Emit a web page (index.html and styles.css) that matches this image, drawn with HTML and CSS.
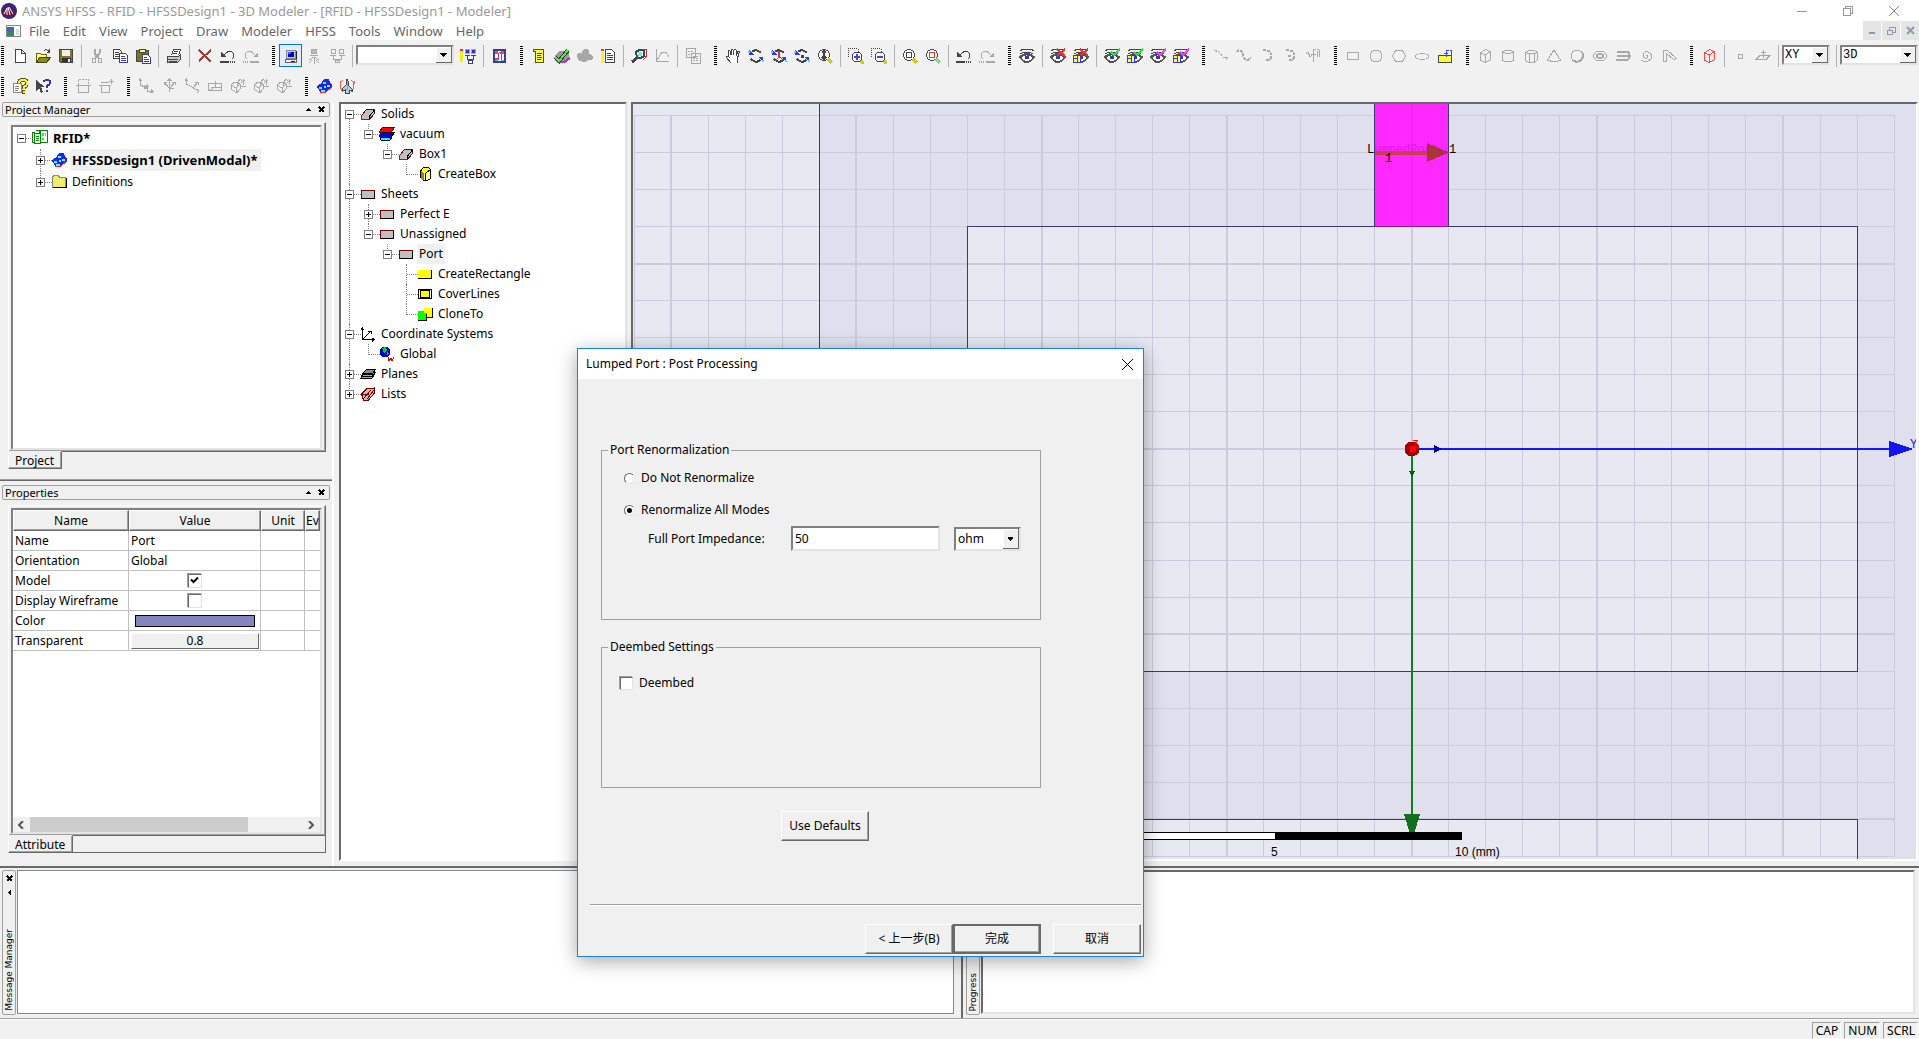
FILE: index.html
```html
<!DOCTYPE html>
<html lang="en">
<head>
<meta charset="utf-8">
<title>ANSYS HFSS - RFID - HFSSDesign1 - 3D Modeler</title>
<link rel="stylesheet" href="styles.css">
</head>
<body>
<svg class="defs" aria-hidden="true">
  <symbol id="new" viewBox="0 0 16 16"><path d="M3.500 1.500h6l4 4v9h-10zM9.500 1.500v4h4" fill="#fff" stroke="#444"/></symbol>
  <symbol id="open" viewBox="0 0 16 16"><path d="M1.500 14.500v-9h4l1 1h5v3" fill="#ffff80" stroke="#666600"/><path d="M1.500 14.500l3-5h11l-4 5z" fill="#8a8a20" stroke="#444400"/><path d="M9 3q3-3 5 1M14.500 1v4M12 4.500h3" stroke="#444" fill="none"/></symbol>
  <symbol id="save" viewBox="0 0 16 16"><path d="M1.500 1.500h13v13h-12l-1-1z" fill="#7a7a20" stroke="#444"/><path d="M4 2h8v6H4z" fill="#eee"/><path d="M4 10h9v4H4z" fill="#333"/><path d="M10 11h2v3h-2z" fill="#eee"/></symbol>
  <symbol id="cut" viewBox="0 0 16 16"><path d="M5.500 1v4l4 5M10.500 1v4l-4 5" stroke="#a8a8a8" stroke-width="2" fill="none"/><path d="M3.500 10.500h3v4h-3zM9.500 10.500h3v4h-3z" stroke="#a8a8a8" fill="none"/></symbol>
  <symbol id="copy" viewBox="0 0 16 16"><path d="M1.500 1.500h6l2 2v7h-8z" fill="#fff" stroke="#444"/><path d="M3 4.500h4M3 6.500h4M3 8.500h4" stroke="#444"/><path d="M7.500 5.500h6l2 2v7h-8z" fill="#fff" stroke="#3c3c9c"/><path d="M9 8.500h4M9 10.500h5M9 12.500h5" stroke="#3c3c9c"/></symbol>
  <symbol id="paste" viewBox="0 0 16 16"><path d="M1.500 2.500h12v11h-12z" fill="#77771c" stroke="#444"/><path d="M4.500 4.500v-3h6v3z" fill="#ffff60" stroke="#444"/><path d="M7.500 6.500h5l3 3v6h-8z" fill="#fff" stroke="#3c3c9c"/><path d="M9 9.500h3M9 11.500h5M9 13.500h5" stroke="#3c3c9c"/></symbol>
  <symbol id="print" viewBox="0 0 16 16"><path d="M5.500 7.500l2-6h7l-2 6" fill="#fff" stroke="#444"/><path d="M8 3.500h4M7 5.500h4" stroke="#444"/><path d="M1.500 8.500h11l2-2v5l-3 3h-10z" fill="#ccc" stroke="#444"/><path d="M2 11.500h10M3 13.500h8" stroke="#444"/><path d="M9 9h2v1H9z" fill="#cc0"/></symbol>
  <symbol id="del" viewBox="0 0 16 16"><path d="M2 2l12 12M14 2L2 13" stroke="#a03c3c" stroke-width="2" fill="none"/></symbol>
  <symbol id="undo" viewBox="0 0 16 16"><path d="M4 7q4-5 8-3 4 3 0 7" fill="none" stroke="currentColor"/><path d="M1 9V4l5 5z" fill="currentColor"/><path d="M0 13.500h9M10 13.500h1M12 13.500h1M14 13.500h1" stroke="currentColor" stroke-width="2"/></symbol>
  <symbol id="redo" viewBox="0 0 16 16"><path d="M12 7Q8 2 4 4q-4 3 0 7" fill="none" stroke="currentColor"/><path d="M15 9V4l-5 5z" fill="currentColor"/><path d="M7 13.500h9M0 13.500h1M2 13.500h1M4 13.500h1" stroke="currentColor" stroke-width="2"/></symbol>
  <symbol id="pc" viewBox="0 0 16 16"><path d="M3.500 2.500h9v8h-9z" fill="#ccc" stroke="#888"/><path d="M5 4h6v5H5z" fill="#00c"/><path d="M5 4h3v2H5z" fill="#46f"/><path d="M2.500 11.500h11v3h-11z" fill="#eee" stroke="#666"/><path d="M8 13h4M13.500 3v8" stroke="#222"/></symbol>
  <symbol id="pcnet" viewBox="0 0 16 16"><path d="M5.500 1.500h5v4h-5zM4 7.500h8" stroke="#a8a8a8" fill="#bbb"/><path d="M8 9l-5 3M8 9l5 3M8 10v6M6 12l-3 3M10 12l3 3" stroke="#a8a8a8"/></symbol>
  <symbol id="pcs" viewBox="0 0 16 16"><path d="M2.500 1.500h4v4h-4zM10.500 1.500h4v4h-4zM1 7.500h6M10 7.500h6M4.500 8v3h8V8M8.500 11v2" stroke="#a8a8a8" fill="none"/><path d="M6.500 12.500h4v2h-4z" stroke="#a8a8a8" fill="none"/></symbol>
  <symbol id="conf" viewBox="0 0 16 16"><path d="M0 3h3v9l-1 3H1l-1-3z" fill="#ee2"/><path d="M0 1h3v2H0z" fill="#e33"/><path d="M5.500 1.500h4v4h-4zM11.500 1.500h4v4h-4z" fill="#33c" stroke="#aaa"/><path d="M5 7.500h5M11 7.500h5M7.500 8v3h6V8M10.500 11v2" stroke="#444" fill="none"/><path d="M8.500 12.500h4v3h-4z" fill="#fff" stroke="#3c3c9c"/></symbol>
  <symbol id="omega" viewBox="0 0 16 16"><path d="M3 2h11v12H3z" fill="#fff" stroke="#3c3c8c" stroke-width="2"/><path d="M4 3h3v3H4zM10 3h3v3h-3zM4 10h3v3H4z" fill="#f44"/><path d="M7 12V6q2-3 3 0v6" stroke="#a3a" stroke-width="1" fill="#fff"/><path d="M5 12.500h2M10 12.500h3" stroke="#3cc"/></symbol>
  <symbol id="notes" viewBox="0 0 16 16"><path d="M2.500 1.500h10v13h-8v-11h-2z" fill="#ffff4a" stroke="#55550a"/><path d="M6 5.500h5M6 7.500h4M6 9.500h5M6 11.500h4" stroke="#444"/></symbol>
  <symbol id="valid" viewBox="0 0 16 16"><path d="M1 7l5-4h6l3 3v6l-4 3H4l-3-2z" fill="#999"/><path d="M10 3h4v3h-4z" fill="#5dd"/><path d="M4 14h6l6-4" stroke="#b3b" stroke-width="2" fill="none"/><path d="M1 9l4 4L14 2" stroke="#3a3a3a" stroke-width="4" fill="none"/><path d="M1 9l4 4L14 2" stroke="#4e4" stroke-width="2" fill="none"/></symbol>
  <symbol id="blob" viewBox="0 0 16 16"><path d="M0 7q2-3 5-2 0-4 4-4t3 5q4 0 4 4-1 2-4 2-4 3-8 1-4 0-4-6z" fill="#a8a8a8"/></symbol>
  <symbol id="list" viewBox="0 0 16 16"><path d="M5.500 1.500h6l3 3v10h-9z" fill="#fff" stroke="#444"/><path d="M7 5.500h4M7 7.500h6M7 9.500h6M7 11.500h6" stroke="#3c3c9c"/><path d="M1 4h3v9l-1 2H1z" fill="#fe3"/><path d="M1 1h3v2H1z" fill="#e33"/></symbol>
  <symbol id="solve" viewBox="0 0 16 16"><path d="M5 4l3-2h5v6l-3 2H6z" fill="#fff" stroke="#444" stroke-width="2"/><path d="M7 4h4v4H7z" fill="#6ee"/><path d="M6 10l-5 4" stroke="#444" stroke-width="3"/><path d="M15.500 2v6l-3 4M11 1.500h5" stroke="#a33" fill="none"/></symbol>
  <symbol id="plot" viewBox="0 0 16 16"><path d="M2.500 1v12.500H15M3 12l5-8h4l3 5" stroke="#a8a8a8" fill="none"/></symbol>
  <symbol id="copies" viewBox="0 0 16 16"><path d="M1.500.500h9v9h-9zM6.500 5.500h9v10h-9z" fill="#f0f0f0" stroke="#a8a8a8"/><path d="M8 8.500h6M8 10.500h6M8 12.500h6M3 3.500h6M3 6.500h3" stroke="#a8a8a8" stroke-dasharray="2 1"/></symbol>
  <symbol id="hand" viewBox="0 0 16 16"><path d="M6 15l-5-6q1-2 3 0L3 3q1-1 2 0l1 4V2q1-2 2 0v5l1-5q2-1 2 0v6l2-5q2 0 1 2l-2 7v3" fill="#fff" stroke="#444"/></symbol>
  <symbol id="rot" viewBox="0 0 16 16"><path d="M4 4q4-4 9 1M12 12q-4 4-9-1" stroke="#444" stroke-width="2" fill="none"/><path d="M1 2v5h5zM15 14V9h-5z" fill="#33f"/><path d="M0 3h2v2H0zM14 12h2v2h-2z" fill="#3ef"/></symbol>
  <symbol id="rotax" viewBox="0 0 16 16"><use href="#rot"/><path d="M8 3v6" stroke="#d33" stroke-width="2"/><path d="M8 9l-4 4" stroke="#3a3"/><path d="M8 9l5 3" stroke="#33f"/></symbol>
  <symbol id="rotpt" viewBox="0 0 16 16"><use href="#rot"/><path d="M7 7h3v3H7z" fill="#444"/></symbol>
  <symbol id="lens" viewBox="0 0 16 16"><circle cx="7" cy="7" r="5.500" fill="#fff" stroke="#444"/><path d="M11 11l4 4" stroke="#cc2" stroke-width="3"/></symbol>
  <symbol id="zoomud" viewBox="0 0 16 16"><use href="#lens"/><path d="M7 3v8M5 5l2-2 2 2M5 9l2 2 2-2" stroke="#444" stroke-width="2" fill="none"/></symbol>
  <symbol id="zin" viewBox="0 0 16 16"><path d="M.500 9V.500H10V4" stroke="#444" stroke-dasharray="1 1" fill="none"/><circle cx="9" cy="9" r="5" fill="#fff" stroke="#444"/><path d="M6 9h6M9 6v6" stroke="#44f" stroke-width="2"/><path d="M13 13l3 3" stroke="#cc2" stroke-width="3"/></symbol>
  <symbol id="zout" viewBox="0 0 16 16"><path d="M.500 9V.500H10V4" stroke="#444" stroke-dasharray="1 1" fill="none"/><circle cx="9" cy="9" r="5" fill="#fff" stroke="#444"/><path d="M6 9h6" stroke="#44f" stroke-width="2"/><path d="M13 13l3 3" stroke="#cc2" stroke-width="3"/></symbol>
  <symbol id="fit" viewBox="0 0 16 16"><use href="#lens"/><path d="M4.500 4.500h5v5h-5z" fill="none" stroke="#444"/></symbol>
  <symbol id="fitsel" viewBox="0 0 16 16"><use href="#lens"/><path d="M4.500 4.500h5v5h-5z" fill="none" stroke="#f33"/><path d="M12 12l2 2" stroke="#3ee" stroke-width="2"/></symbol>
  <symbol id="eye" viewBox="0 0 16 16"><path d="M1 2.500q7-3 14 0M1 6q7-4 13 0" stroke="#444" fill="none"/><path d="M1 9q7-6 14 0q-3 5-7 5T1 9z" fill="#fff" stroke="#555" stroke-width="2"/><path d="M6 6h4v5H6z" fill="#3c3c9c"/><path d="M7 7h1v1H7z" fill="#fff"/></symbol>
  <symbol id="box2" viewBox="0 0 16 16"><path d="M.500 7.500h7v7h-7z" fill="#ff3" stroke="#33f"/><path d="M1 10.500h3v4M4 8v3" stroke="#33f" fill="none"/></symbol>
  <symbol id="eyex" viewBox="0 0 16 16"><use href="#eye"/><path d="M7 1l8 7M15 1L7 8" stroke="#e33" stroke-width="2"/></symbol>
  <symbol id="eyexb" viewBox="0 0 16 16"><use href="#eyex"/><use href="#box2"/></symbol>
  <symbol id="eyec" viewBox="0 0 16 16"><use href="#eye"/><path d="M7 4l3 3 6-6" stroke="currentColor" stroke-width="2" fill="none"/></symbol>
  <symbol id="eyecb" viewBox="0 0 16 16"><use href="#eyec"/><use href="#box2"/></symbol>
  <symbol id="line" viewBox="0 0 16 16"><path d="M1 2l5 2 4 5 5 1" stroke="#a8a8a8" stroke-dasharray="3 1" fill="none"/><path d="M13 9v3" stroke="#a8a8a8"/></symbol>
  <symbol id="spline" viewBox="0 0 16 16"><path d="M1 4q4-5 6 3t8 3" stroke="#a8a8a8" stroke-width="2" stroke-dasharray="3 1" fill="none"/></symbol>
  <symbol id="arc" viewBox="0 0 16 16"><path d="M4 2.500q9-1 8 6 0 4-5 4" stroke="#a8a8a8" stroke-width="2" stroke-dasharray="3 1" fill="none"/></symbol>
  <symbol id="arcc" viewBox="0 0 16 16"><use href="#arc"/><path d="M6 7h3v2H6z" fill="#a8a8a8"/></symbol>
  <symbol id="eqn" viewBox="0 0 16 16"><path d="M1 6l2-2 2 5 2-2M8.500 14V3q0-2 2-2M6 6.500h5M12.500 3v6M12 1.500h2q1 4 0 8" stroke="currentColor" fill="none"/></symbol>
  <symbol id="rect" viewBox="0 0 16 16"><path d="M2.500 4.500h11v7h-11z" stroke="#a8a8a8" fill="none"/></symbol>
  <symbol id="circ" viewBox="0 0 16 16"><circle cx="8" cy="8" r="6" stroke="#a8a8a8" fill="none"/></symbol>
  <symbol id="hex" viewBox="0 0 16 16"><path d="M4.500 2.500h7l3 5.500-3 5.500h-7L1.500 8z" stroke="#a8a8a8" fill="none"/></symbol>
  <symbol id="ell" viewBox="0 0 16 16"><ellipse cx="8" cy="8.500" rx="6.500" ry="3" stroke="#a8a8a8" fill="none"/></symbol>
  <symbol id="eqs" viewBox="0 0 16 16"><path d="M1.500 7.500h13v7h-13z" fill="#ff3" stroke="#444"/><path d="M9.500 9V2.500h2M7 5.500h4M13 2.500h1v7" stroke="#44f" fill="none"/></symbol>
  <symbol id="cube" viewBox="0 0 16 16"><path d="M3.500 5l5-3.500 5 2v8l-5 3-5-2zM3.500 5l5 2 5-3.500M8.500 7v7" stroke="currentColor" fill="none"/></symbol>
  <symbol id="cyl" viewBox="0 0 16 16"><path d="M2.500 4v8q5.500 4 11 0V4Q8 0 2.500 4q5.500 3 11 0" stroke="#a8a8a8" fill="none"/></symbol>
  <symbol id="prism" viewBox="0 0 16 16"><path d="M2.500 4.500l3-2h6l3 2v7l-3 3h-6l-3-2zM2.500 4.500l3 1h6l3-1M6.500 6v8M11.500 6v8" stroke="#a8a8a8" fill="none"/></symbol>
  <symbol id="cone" viewBox="0 0 16 16"><path d="M8 2l6.500 10q-6 3-13 0z" stroke="#a8a8a8" fill="none"/></symbol>
  <symbol id="sph" viewBox="0 0 16 16"><circle cx="8" cy="8" r="6" stroke="#a8a8a8" fill="none"/><path d="M3 12q6 4 10-1 2-4 0-7" stroke="#a8a8a8" stroke-width="2" fill="none"/></symbol>
  <symbol id="torus" viewBox="0 0 16 16"><ellipse cx="8" cy="8" rx="6.500" ry="5" stroke="#a8a8a8" fill="none"/><ellipse cx="8" cy="8" rx="3" ry="2" stroke="#a8a8a8" stroke-width="2" fill="none"/></symbol>
  <symbol id="helix" viewBox="0 0 16 16"><path d="M2 4h10l3 1M2 8h12M1 12h12M13 4l2 4-2 4" stroke="#a8a8a8" stroke-width="2" fill="none"/></symbol>
  <symbol id="spiral" viewBox="0 0 16 16"><path d="M8 8q2-2 2 1-3 3-5-1 0-5 5-4 5 2 3 7-5 5-10 1" stroke="#a8a8a8" fill="none"/></symbol>
  <symbol id="bond" viewBox="0 0 16 16"><path d="M2.500 13V2.500h4l9 8-3 1-7-6V13z" stroke="#a8a8a8" fill="none"/></symbol>
  <symbol id="pt" viewBox="0 0 16 16"><path d="M6.500 6.500h4v4h-4z" stroke="#a8a8a8" fill="none"/></symbol>
  <symbol id="plane" viewBox="0 0 16 16"><path d="M1 11.500h10l4-4H5zM8.500 2v8M6 4.500h5" stroke="#a8a8a8" fill="none"/></symbol>
  <symbol id="helpb" viewBox="0 0 16 16"><path d="M1.500 5.500h8v9h-8z" fill="#fff" stroke="#888"/><path d="M3 8.500h4M3 10.500h4M3 12.500h3" stroke="#888"/><path d="M7 5q0-3 4-3t4 3q0 3-3 4v2M10 14h3" stroke="#55550a" stroke-width="4" fill="none"/><path d="M7 5q0-3 4-3t4 3q0 3-3 4v2M11 14h2" stroke="#fe3" stroke-width="2" fill="none"/></symbol>
  <symbol id="helpc" viewBox="0 0 16 16"><path d="M1 2v11l3-3 2 5 2-1-2-5h4z" fill="#444"/><path d="M9 4q0-2 3-2t3 2q0 3-3 4v2M11 13h2" stroke="#33a" stroke-width="2" fill="none"/></symbol>
  <symbol id="sec" viewBox="0 0 16 16"><path d="M3.500 7V1.500h10V7" stroke="#a8a8a8" stroke-dasharray="2 1" fill="none"/><path d="M1 7.500h15M3.500 8v6.500h10V8" stroke="#a8a8a8" fill="none"/></symbol>
  <symbol id="sec2" viewBox="0 0 16 16"><path d="M1 7.500h12M3.500 8v6.500h8V8M3 4.500h8" stroke="#a8a8a8" fill="none"/><path d="M13.500 1v5M11 3.500h5" stroke="#a8a8a8"/></symbol>
  <symbol id="ax1" viewBox="0 0 16 16"><path d="M2.500 1v6l6 3M1 3l1.500-2L4 3M6 7l3 3H6M9.500 7v6l6 1M8 9l1.500-2L11 9M13 11l2 3-3 1" stroke="#a8a8a8" fill="none"/></symbol>
  <symbol id="ax2" viewBox="0 0 16 16"><path d="M8.500 1v13M6.500 3l2-2 2 2M9 10l5-6M11 4h3v3M8 10L3 4M3 7V4h3M9 10l4 1" stroke="#a8a8a8" fill="none"/></symbol>
  <symbol id="ax3" viewBox="0 0 16 16"><path d="M2.500 1v5l7 4M1 3l1.500-2L4 3M9 10l5-6M11 4h3v3M9 10l6 3M13 15l2-2-2-2" stroke="#a8a8a8" fill="none"/></symbol>
  <symbol id="ax4" viewBox="0 0 16 16"><path d="M1.500 5.500h13v7h-13zM4 9.500h8M8.500 3v6l5 0M8 9l-5 3" stroke="#a8a8a8" fill="none"/></symbol>
  <symbol id="ax5" viewBox="0 0 16 16"><path d="M1 7l4-3 5 2v5l-3 4-5-3zM1 7l5 3 4-4M6 10v5M7 8l3-7M13 1v6M8 3l2-2 2 2M11 5l4-3M11 8h5" stroke="#a8a8a8" fill="none"/></symbol>
  <symbol id="hf" viewBox="0 0 16 16"><path d="M3 14l2 1h4l7-5-1-3-5 6z" fill="#f22"/><path d="M7 2l2-1h4l1 4 2 1v3l-4 2-1 2-3 1H4l-1-2-2-2V8l3-2 2-1z" fill="#22e"/><path d="M7 4h3v2H7zM3 9h3v2H3zM11 7h3v2h-3zM5 12h4v2H5zM8 8h2v2H8z" fill="#4ff"/></symbol>
  <symbol id="plane2" viewBox="0 0 16 16"><path d="M4 2Q1 4 2 7l-1 2q1 2 3 5M12 2q3 2 2 5l1 2q-1 2-3 5M1 3v3M15 3v3" stroke="#f54" fill="none"/><path d="M8 1l1 2v4l4 4v2l-3-1v3H6v-3l-3 1v-2l4-4V3z" fill="#bcd" stroke="#444"/><path d="M8 4v8" stroke="#3cc"/></symbol>
  <symbol id="proj" viewBox="0 0 16 16"><path d="M7.500.500h8v12h-8zM3.500.500h5v4" fill="#fff" stroke="#080"/><path d="M.500 2.500h2v10h-2zM2.500 3.500h5l1 1v9h-6z" fill="#fff" stroke="#080"/><path d="M4 6.500h3M4 8.500h3M4 10.500h3" stroke="#080"/><path d="M10 3h2v3h-2zM13 3h1v3h-1zM10 8h2v2h-2z" fill="#0f3"/></symbol>
  <symbol id="folder" viewBox="0 0 16 16"><path d="M1.500 3.500l1-2h5l1 2h6v10h-13z" fill="#ee6" stroke="#888"/><path d="M2 13.500h13V4" stroke="#000" fill="none"/></symbol>
  <symbol id="solid" viewBox="0 0 16 16"><path d="M1.500 9.500l5-6h8v4l-5 6h-8z" fill="#c0c0c0" stroke="#800000"/><path d="M9.500 13v-3l5-6" stroke="#000" fill="none"/><path d="M1.500 9v4.500h7" stroke="#444" fill="none"/></symbol>
  <symbol id="vac" viewBox="0 0 16 16"><path d="M0 6l4-5h12l-4 5z" fill="#f00" stroke="#700"/><path d="M0 9l3-3h13l-4 5H1z" fill="#00d" stroke="#000"/><path d="M1 13l2-2h10l-2 3H2z" fill="#0ff" stroke="#000"/></symbol>
  <symbol id="cbox" viewBox="0 0 16 16"><path d="M3.500 5l3-3.500h5l2 2v9l-3 2h-4l-3-3z" fill="#ffff8c" stroke="#000"/><path d="M4 5l3 2v7H5l-1-2z" fill="#882"/><path d="M4 5l3-3h4l2 2-4 3H7z" fill="#ff0"/><path d="M8.500 7v7M9 7l4-3" stroke="#000"/></symbol>
  <symbol id="sheet" viewBox="0 0 16 16"><path d="M1.500 4.500h13v8h-13z" fill="#c0c0c0" stroke="#800000"/><path d="M1 12.500h13.500V5" stroke="#000" fill="none"/></symbol>
  <symbol id="yrect" viewBox="0 0 16 16"><path d="M1 4h14v9H1z" fill="#ff0"/><path d="M1 12.500h13.500V4" stroke="#000" fill="none"/></symbol>
  <symbol id="cover" viewBox="0 0 16 16"><path d="M1.500 3.500h13v9h-13z" fill="#fff" stroke="#000"/><path d="M3.500 4.500h9v7h-9z" fill="#ff0" stroke="#000"/></symbol>
  <symbol id="clone" viewBox="0 0 16 16"><path d="M7 2h8v9H7z" fill="#ff0"/><path d="M7 11.500h8.500V2" stroke="#000" fill="none"/><path d="M1 5h6v2h3v8H1z" fill="#0f0"/><path d="M1 14.500h8.500V8" stroke="#000" fill="none"/></symbol>
  <symbol id="cs" viewBox="0 0 16 16"><path d="M2.500 2v11.500H14M3 13l8-8M1 4l1.500-2L4 4M12 12l2 1.500-2 2M8 5h3v3" stroke="#000" fill="none"/></symbol>
  <symbol id="globe" viewBox="0 0 16 16"><circle cx="6" cy="6" r="5.500" fill="#00c"/><path d="M3 2l4-1 1 3-3 3zM8 6l2 1-2 3z" fill="#0c3"/><path d="M9 11l1 4 2-3 1 3 2-4" stroke="#d00" stroke-width="1" fill="none"/></symbol>
  <symbol id="planes" viewBox="0 0 16 16"><path d="M.500 12.500l3-4h11l-3 4zM1.500 10l3-4h11l-3 4z" fill="#aaa" stroke="#000"/><path d="M2.500 7.500l4-4h9l-3 4z" fill="#888" stroke="#000"/></symbol>
  <symbol id="lists" viewBox="0 0 16 16"><path d="M1.500 8l5-5 8-1v5l-6 7h-5z" fill="#c0c0c0" stroke="#800000"/><path d="M3 13l8-9M7 13l7-9M1 8h8" stroke="#800000" fill="none"/></symbol>
</svg>

<header class="titlebar">
  <svg class="logo" viewBox="0 0 16 16"><circle cx="8" cy="8" r="8" fill="#3b2473"/><path d="M1 12L7 3l7 9" fill="#7a1030"/><path d="M3 11l3-6M6 12V5M9 12L7 4M12 11L8 4" stroke="#fff" stroke-width="1"/></svg>
  <span class="title-text">ANSYS HFSS - RFID - HFSSDesign1 - 3D Modeler - [RFID - HFSSDesign1 - Modeler]</span>
  <div class="winctl">
    <button aria-label="Minimize"><svg viewBox="0 0 10 10"><path d="M0 5.500h10" stroke="#999"/></svg></button>
    <button aria-label="Restore"><svg viewBox="0 0 10 10"><path d="M.500 2.500h7v7h-7zM2.500 2V.500h7v7H8" fill="none" stroke="#999"/></svg></button>
    <button aria-label="Close"><svg class="smooth" viewBox="0 0 10 10"><path d="M0 0l10 10M10 0L0 10" stroke="#888"/></svg></button>
  </div>
</header>

<nav class="menubar">
  <svg class="docicon" viewBox="0 0 15 12"><path d="M.500.500h14v11H.500z" fill="#fff" stroke="#888"/><path d="M1 2h7v9H1z" fill="#386"/><path d="M1 2h7v4H1z" fill="#46a"/><path d="M10 4h3v6h-3z" fill="#ddd"/></svg>
  <button>File</button><button>Edit</button><button>View</button><button>Project</button><button>Draw</button><button>Modeler</button><button>HFSS</button><button>Tools</button><button>Window</button><button>Help</button>
  <div class="mdictl">
    <button aria-label="Minimize document"><svg viewBox="0 0 9 9"><path d="M1 7h6" stroke="#8c9caa" stroke-width="2"/></svg></button>
    <button aria-label="Restore document"><svg viewBox="0 0 9 9"><path d="M.500 4.500h5v4h-5zM2.500 4V1h6v5H6M0 4h6M2 1h7" fill="none" stroke="#8c9caa"/></svg></button>
    <button aria-label="Close document"><svg class="smooth" viewBox="0 0 9 9"><path d="M1 1l7 7M8 1L1 8" stroke="#8c9caa" stroke-width="2"/></svg></button>
  </div>
</nav>

<div class="toolbars">
  <div class="toolrow">
    <div class="group"><button aria-label="New"><svg><use href="#new"/></svg></button><button aria-label="Open"><svg><use href="#open"/></svg></button><button aria-label="Save"><svg><use href="#save"/></svg></button><i class="sep"></i><button aria-label="Cut"><svg><use href="#cut"/></svg></button><button aria-label="Copy"><svg><use href="#copy"/></svg></button><button aria-label="Paste"><svg><use href="#paste"/></svg></button><i class="sep"></i><button aria-label="Print"><svg><use href="#print"/></svg></button><i class="sep"></i><button aria-label="Delete"><svg><use href="#del"/></svg></button><button aria-label="Undo"><svg><use href="#undo"/></svg></button><button aria-label="Redo" class="off"><svg><use href="#redo"/></svg></button></div>
    <div class="group"><button aria-label="Local machine" class="on"><svg><use href="#pc"/></svg></button><button aria-label="Remote"><svg><use href="#pcnet"/></svg></button><button aria-label="Distributed"><svg><use href="#pcs"/></svg></button><i class="sep"></i><select class="machine" aria-label="Machine"><option></option></select><button aria-label="Configure machines"><svg><use href="#conf"/></svg></button><i class="sep"></i><button aria-label="Optimetrics"><svg><use href="#omega"/></svg></button></div>
    <div class="group"><button aria-label="Design notes"><svg><use href="#notes"/></svg></button><button aria-label="Validate"><svg><use href="#valid"/></svg></button><button aria-label="Analyze"><svg><use href="#blob"/></svg></button><button aria-label="Edit notes"><svg><use href="#list"/></svg></button><i class="sep"></i><button aria-label="Solution data"><svg><use href="#solve"/></svg></button><button aria-label="Report"><svg><use href="#plot"/></svg></button><i class="sep"></i><button aria-label="Copy image"><svg><use href="#copies"/></svg></button></div>
    <div class="group"><button aria-label="Pan"><svg><use href="#hand"/></svg></button><button aria-label="Rotate"><svg><use href="#rot"/></svg></button><button aria-label="Rotate about axis"><svg><use href="#rotax"/></svg></button><button aria-label="Rotate about centre"><svg><use href="#rotpt"/></svg></button><button aria-label="Zoom"><svg><use href="#zoomud"/></svg></button><i class="sep"></i><button aria-label="Zoom in"><svg><use href="#zin"/></svg></button><button aria-label="Zoom out"><svg><use href="#zout"/></svg></button><i class="sep"></i><button aria-label="Fit all"><svg><use href="#fit"/></svg></button><button aria-label="Fit selection"><svg><use href="#fitsel"/></svg></button><i class="sep"></i><button aria-label="Undo view"><svg><use href="#undo"/></svg></button><button aria-label="Redo view" class="off"><svg><use href="#redo"/></svg></button></div>
    <div class="group"><button aria-label="Visibility"><svg><use href="#eye"/></svg></button><i class="sep"></i><button aria-label="Hide"><svg><use href="#eyex"/></svg></button><button aria-label="Hide in all views"><svg><use href="#eyexb"/></svg></button><i class="sep"></i><button aria-label="Show" class="green"><svg><use href="#eyec"/></svg></button><button aria-label="Show in all views" class="green"><svg><use href="#eyecb"/></svg></button><button aria-label="Show only" class="pink"><svg><use href="#eyec"/></svg></button><button aria-label="Show only in all views" class="pink"><svg><use href="#eyecb"/></svg></button></div>
    <div class="group"><button aria-label="Line"><svg><use href="#line"/></svg></button><button aria-label="Spline"><svg><use href="#spline"/></svg></button><button aria-label="Arc"><svg><use href="#arc"/></svg></button><button aria-label="Centre arc"><svg><use href="#arcc"/></svg></button><button aria-label="Equation curve" class="off"><svg><use href="#eqn"/></svg></button></div>
    <div class="group"><button aria-label="Rectangle"><svg><use href="#rect"/></svg></button><button aria-label="Circle"><svg><use href="#circ"/></svg></button><button aria-label="Polygon"><svg><use href="#hex"/></svg></button><button aria-label="Ellipse"><svg><use href="#ell"/></svg></button><button aria-label="Equation surface"><svg><use href="#eqs"/></svg></button></div>
    <div class="group"><button aria-label="Box" class="off"><svg><use href="#cube"/></svg></button><button aria-label="Cylinder"><svg><use href="#cyl"/></svg></button><button aria-label="Prism"><svg><use href="#prism"/></svg></button><button aria-label="Cone"><svg><use href="#cone"/></svg></button><button aria-label="Sphere"><svg><use href="#sph"/></svg></button><button aria-label="Torus"><svg><use href="#torus"/></svg></button><button aria-label="Helix"><svg><use href="#helix"/></svg></button><button aria-label="Spiral"><svg><use href="#spiral"/></svg></button><button aria-label="Bondwire"><svg><use href="#bond"/></svg></button></div>
    <div class="group last"><button aria-label="Region" class="red"><svg><use href="#cube"/></svg></button><i class="sep"></i><button aria-label="Point"><svg><use href="#pt"/></svg></button><button aria-label="Plane"><svg><use href="#plane"/></svg></button><i class="sep"></i><select class="xy" aria-label="Drawing plane"><option>XY</option></select><i class="sep"></i><select class="dim" aria-label="Movement mode"><option>3D</option></select></div>
  </div>
  <div class="toolrow second">
    <div class="group"><button aria-label="Help topics"><svg><use href="#helpb"/></svg></button><button aria-label="Context help"><svg><use href="#helpc"/></svg></button></div>
    <div class="group"><button aria-label="Section"><svg><use href="#sec"/></svg></button><button aria-label="Add section"><svg><use href="#sec2"/></svg></button></div>
    <div class="group"><button aria-label="Relative offset"><svg><use href="#ax1"/></svg></button><button aria-label="Relative rotated"><svg><use href="#ax2"/></svg></button><button aria-label="Relative both"><svg><use href="#ax3"/></svg></button><button aria-label="Face system"><svg><use href="#ax4"/></svg></button><button aria-label="Object offset"><svg><use href="#ax5"/></svg></button><button aria-label="Object rotated"><svg><use href="#ax5"/></svg></button><button aria-label="Object both"><svg><use href="#ax5"/></svg></button></div>
    <div class="group"><button aria-label="Insert HFSS design"><svg><use href="#hf"/></svg></button><button aria-label="Insert HFSS-IE design"><svg><use href="#plane2"/></svg></button></div>
  </div>
</div>

<main class="work">
  <aside class="docks">
    <section class="dock project">
      <h2 class="caption"><span>Project Manager</span><button aria-label="Collapse project manager"><svg viewBox="0 0 7 7"><path d="M1 5h5L3.500 2z"/></svg></button><button aria-label="Close project manager"><svg viewBox="0 0 7 7"><path d="M1 1l5 5M6 1L1 6" stroke="#000" stroke-width="2"/></svg></button></h2>
      <div class="frame">
        <div class="sunken">
          <ul class="tree wide">
            <li><div class="node"><b class="exp"></b><svg><use href="#proj"/></svg><strong>RFID*</strong></div>
              <ul>
                <li><div class="node"><b class="exp plus"></b><svg><use href="#hf"/></svg><strong class="sel">HFSSDesign1 (DrivenModal)*</strong></div></li>
                <li><div class="node"><b class="exp plus"></b><svg><use href="#folder"/></svg><span>Definitions</span></div></li>
              </ul>
            </li>
          </ul>
        </div>
      </div>
      <div class="tabs"><button>Project</button></div>
    </section>
    <section class="dock props">
      <h2 class="caption"><span>Properties</span><button aria-label="Collapse properties"><svg viewBox="0 0 7 7"><path d="M1 5h5L3.500 2z"/></svg></button><button aria-label="Close properties"><svg viewBox="0 0 7 7"><path d="M1 1l5 5M6 1L1 6" stroke="#000" stroke-width="2"/></svg></button></h2>
      <div class="frame">
        <div class="sunken">
          <table>
            <colgroup><col class="c-name"><col class="c-value"><col class="c-unit"><col></colgroup>
            <thead><tr><th>Name</th><th>Value</th><th>Unit</th><th>Ev</th></tr></thead>
            <tbody>
              <tr><td>Name</td><td>Port</td><td></td><td></td></tr>
              <tr><td>Orientation</td><td>Global</td><td></td><td></td></tr>
              <tr><td><label for="model">Model</label></td><td class="mid"><input type="checkbox" id="model" checked></td><td></td><td></td></tr>
              <tr><td><label for="wire">Display Wireframe</label></td><td class="mid"><input type="checkbox" id="wire"></td><td></td><td></td></tr>
              <tr><td>Color</td><td class="mid"><button class="swatch" aria-label="Color"></button></td><td></td><td></td></tr>
              <tr><td>Transparent</td><td class="mid"><button class="cellbtn">0.8</button></td><td></td><td></td></tr>
            </tbody>
          </table>
          <div class="hscroll"><svg viewBox="0 0 8 8"><path d="M6 0L2 4l4 4" fill="none" stroke="#555" stroke-width="2"/></svg><div class="track"><i></i></div><svg viewBox="0 0 8 8"><path d="M2 0l4 4-4 4" fill="none" stroke="#555" stroke-width="2"/></svg></div>
        </div>
      </div>
      <div class="tabs filled"><button>Attribute</button></div>
    </section>
  </aside>

  <section class="modeltree">
    <ul class="tree">
      <li><div class="node"><b class="exp"></b><svg><use href="#solid"/></svg><span>Solids</span></div>
        <ul><li><div class="node"><b class="exp"></b><svg><use href="#vac"/></svg><span>vacuum</span></div>
          <ul><li><div class="node"><b class="exp"></b><svg><use href="#solid"/></svg><span>Box1</span></div>
            <ul><li><div class="node leaf"><svg><use href="#cbox"/></svg><span>CreateBox</span></div></li></ul></li></ul></li></ul></li>
      <li><div class="node"><b class="exp"></b><svg><use href="#sheet"/></svg><span>Sheets</span></div>
        <ul><li><div class="node"><b class="exp plus"></b><svg><use href="#sheet"/></svg><span>Perfect E</span></div></li>
          <li><div class="node"><b class="exp"></b><svg><use href="#sheet"/></svg><span>Unassigned</span></div>
            <ul><li><div class="node"><b class="exp"></b><svg><use href="#sheet"/></svg><span class="sel">Port</span></div>
              <ul><li><div class="node leaf"><svg><use href="#yrect"/></svg><span>CreateRectangle</span></div></li>
                <li><div class="node leaf"><svg><use href="#cover"/></svg><span>CoverLines</span></div></li>
                <li><div class="node leaf"><svg><use href="#clone"/></svg><span>CloneTo</span></div></li></ul></li></ul></li></ul></li>
      <li><div class="node"><b class="exp"></b><svg><use href="#cs"/></svg><span>Coordinate Systems</span></div>
        <ul><li><div class="node leaf"><svg><use href="#globe"/></svg><span>Global</span></div></li></ul></li>
      <li><div class="node"><b class="exp plus"></b><svg><use href="#planes"/></svg><span>Planes</span></div></li>
      <li><div class="node"><b class="exp plus"></b><svg><use href="#lists"/></svg><span>Lists</span></div></li>
    </ul>
  </section>

  <section class="viewport">
    <svg class="scene" viewBox="633 104 1283 755" preserveAspectRatio="xMinYMin slice">
      <path d="M633 104h1284v756H633z" fill="#e8e8f2"/>
      <path d="M819 104h1098v756h-60v-41H819z" fill="#e0dfed"/>
      <path d="M967 226h890v445H967z" fill="#e8e8f2"/>
      <g fill="none" stroke="#cbcbdb">
        <path d="M634.500 115v741M708.500 115v741M745.500 115v741M782.500 115v741M819.500 115v741M893.500 115v741M930.500 115v741M967.500 115v741M1004.500 115v741M1078.500 115v741M1115.500 115v741M1152.500 115v741M1189.500 115v741M1263.500 115v741M1300.500 115v741M1337.500 115v741M1374.500 115v741M1448.500 115v741M1485.500 115v741M1522.500 115v741M1559.500 115v741M1634.500 115v741M1671.500 115v741M1708.500 115v741M1745.500 115v741M1820.500 115v741M1857.500 115v741M1894.500 115v741"/>
        <path d="M634 115.500h1261M634 152.500h1261M634 189.500h1261M634 226.500h1261M634 300.500h1261M634 337.500h1261M634 374.500h1261M634 411.500h1261M634 485.500h1261M634 522.500h1261M634 560.500h1261M634 597.500h1261M634 671.500h1261M634 708.500h1261M634 745.500h1261M634 782.500h1261M634 856.500h1261"/>
        <path stroke-width="2" d="M671 115v741M856 115v741M1042 115v741M1227 115v741M1412 115v741M1597 115v741M1783 115v741M634 264h1261M634 449h1261M634 634h1261M634 819h1261"/>
      </g>
      <path d="M1375 104h73v122h-73z" fill="#ff28ff"/>
      <path d="M1412 104v122" stroke="#f622fa" stroke-width="2"/>
      <path d="M819.500 104v715.500h1038V860M967.500 226.500h890v445h-890zM1374.500 104v122M1448.500 104v122" fill="none" stroke="#3a3a72"/>
      <path d="M1375 226.500h73" stroke="#8a1a9a"/>
      <text class="mono" x="1367" y="153">L<tspan fill="#e416e4">umpedPort</tspan></text><text class="mono" x="1449" y="153">1</text>
      <path d="M1375 152.500h53" stroke="#c8404c" stroke-width="4"/><path d="M1427 143l22 9.500-22 9.500z" fill="#a8343c"/>
      <text class="mono" x="1385" y="162">1</text>
      <path d="M1416 449h474" stroke="#1414ff" stroke-width="2"/><path d="M1889 441l24 8-24 8z" fill="#1414f0"/><path d="M1434 445l8 4-8 4z" fill="#0000b8"/>
      <path d="M1412 449v366" stroke="#10801c" stroke-width="2"/><path d="M1404 814h16l-6 20h-4z" fill="#12701c"/><path d="M1409 471h6l-3 6z" fill="#006000"/>
      <circle cx="1412" cy="449" r="7.500" fill="#a80000"/><circle cx="1413" cy="449" r="3.500" fill="#f00"/><text class="mono" x="1412" y="447" fill="#f00">z</text>
      <text class="mono" x="1910" y="448" fill="#1414ff">Y</text>
      <path d="M1088.500 832.500h373v7h-373z" fill="#fff" stroke="#000"/><path d="M1275 832h187v8h-187z"/>
      <text class="scale" x="1271" y="856">5</text><text class="scale" x="1455" y="856">10 (mm)</text>
    </svg>
  </section>
</main>

<section class="bottom">
  <div class="bdock msg">
    <div class="vcap"><button aria-label="Close message manager"><svg viewBox="0 0 7 7"><path d="M1 1l5 5M6 1L1 6" stroke="#000" stroke-width="2"/></svg></button><button aria-label="Collapse message manager"><svg viewBox="0 0 7 7"><path d="M5 1v5L2 3.500z"/></svg></button><span>Message Manager</span></div>
    <div class="pane"></div>
  </div>
  <div class="bdock prog">
    <div class="vcap"><span>Progress</span></div>
    <div class="pane"></div>
  </div>
</section>

<footer class="status"><span>CAP</span><span>NUM</span><span>SCRL</span></footer>

<div class="dialog" role="dialog" aria-labelledby="dlg-title">
  <div class="dlg-title"><span id="dlg-title">Lumped Port : Post Processing</span><button aria-label="Close dialog"><svg class="smooth" viewBox="0 0 11 11"><path d="M0 0l11 11M11 0L0 11" stroke="#000"/></svg></button></div>
  <form class="dlg-body">
    <fieldset class="renorm"><legend>Port Renormalization</legend>
      <label class="opt"><input type="radio" name="renorm">Do Not Renormalize</label>
      <label class="opt"><input type="radio" name="renorm" checked>Renormalize All Modes</label>
      <div class="imp"><label for="imp">Full Port Impedance:</label><input type="text" id="imp" value="50"><select class="ohm" aria-label="Impedance unit"><option>ohm</option></select></div>
    </fieldset>
    <fieldset class="deembed"><legend>Deembed Settings</legend>
      <label class="opt"><input type="checkbox">Deembed</label>
    </fieldset>
    <button type="button" class="btn defaults">Use Defaults</button>
    <div class="dlg-foot">
      <button type="button" class="btn">&lt; 上一步(B)</button><button type="button" class="btn primary">完成</button><button type="button" class="btn cancel">取消</button>
    </div>
  </form>
</div>
</body>
</html>
```
FILE: styles.css
```css
* { box-sizing: border-box; }

body {
  margin: 0;
  height: 100vh;
  display: flex;
  flex-direction: column;
  overflow: hidden;
  background: #f0f0f0;
  color: #000;
  font: 12px/20px "Noto Sans", "Noto Sans CJK SC", sans-serif;
}

.defs { position: absolute; width: 0; height: 0; }
svg { display: block; flex: none; shape-rendering: crispEdges; }
.smooth, .logo { shape-rendering: auto; }

button, input, select {
  margin: 0;
  padding: 0;
  border: 0;
  border-radius: 0;
  background: none;
  color: inherit;
  font: inherit;
  appearance: none;
}

/* title and menu */
.titlebar { display: flex; align-items: center; height: 21px; flex: none; background: #fff; color: #999; font-size: 13px; }
.logo { width: 16px; height: 16px; margin: 0 5px 0 1px; }
.title-text { flex: 1; white-space: nowrap; }
.winctl { display: flex; margin-right: 2px; }
.winctl button { width: 46px; height: 18px; display: grid; place-items: center; }
.winctl svg { width: 10px; height: 10px; }

.menubar { display: flex; align-items: center; height: 19px; flex: none; background: #fff; color: #666; font-size: 13px; }
.docicon { width: 15px; height: 12px; margin: 0 0 0 6px; }
.menubar > button { padding: 0 5px 0 8px; }
.mdictl { display: flex; gap: 1px; margin-left: auto; align-self: stretch; }
.mdictl button { width: 18px; background: #e5e5e5; display: grid; place-items: center; }
.mdictl svg { width: 9px; height: 9px; }

/* toolbars */
.toolbars { flex: none; height: 62px; background: #f1f1f1; }
.toolrow { display: flex; height: 31px; align-items: center; padding-left: 1px; }
.toolrow.second { height: 30px; }
.group { display: flex; align-items: center; margin-right: 10px; }
.group::before { content: ""; width: 3px; height: 19px; margin-right: 4px; background: repeating-linear-gradient(#000 0 1px, transparent 1px 2px); }
.group.last { margin-right: 0; flex: 1; }
.group button { width: 23px; height: 23px; display: grid; place-items: center; color: #444; }
.group svg { width: 16px; height: 16px; }
.group .off { color: #a8a8a8; }
.group .green { color: #3d4; }
.group .pink { color: #e4e; }
.group .red { color: #f44; }
.group .on { background: #e0ecf7; border: 1px solid #0078d7; }
.sep { width: 1px; height: 22px; margin: 0 3px 0 4px; background: #b4b4b4; }

select {
  background: #fff url("data:image/svg+xml,%3Csvg xmlns='http://www.w3.org/2000/svg' width='16' height='16' shape-rendering='crispEdges'%3E%3Cpath fill='%23f0f0f0' d='M0 0h16v16H0z'/%3E%3Cpath d='M.5 15V.5H15' stroke='%23fff' fill='none'/%3E%3Cpath d='M0 15.500h15.500V0' stroke='%23696969' fill='none'/%3E%3Cpath d='M4 6h7L7.500 10z'/%3E%3C/svg%3E") no-repeat right center;
  border: 2px solid;
  border-color: #808080 #e3e3e3 #e3e3e3 #808080;
}
.machine { width: 98px; height: 20px; margin: 0 2px 2px 0; }
.xy, .dim { height: 20px; line-height: 16px; font-family: "Liberation Mono", monospace; padding-left: 1px; margin-bottom: 2px; }
.xy { width: 48px; margin-right: 2px; }
.dim { flex: 1; min-width: 60px; margin-right: 1px; }

/* main area */
.work { flex: 1; min-height: 0; display: flex; }
.docks { width: 334px; flex: none; display: flex; flex-direction: column; border-right: 2px solid #fff; margin-right: 5px; }
.dock { display: flex; flex-direction: column; padding: 0 6px 0 8px; }
.project { height: 379px; flex: none; border-bottom: 1px solid #696969; box-shadow: inset 0 -1px #a0a0a0; }
.props { flex: 1; min-height: 0; padding-top: 4px; }
.caption {
  display: flex; align-items: center; height: 15px; flex: none; gap: 2px;
  margin: 0 -4px 5px -6px; padding: 0 2px;
  border: 1px solid #a0a0a0; border-radius: 2px;
  font: 11px/13px "Noto Sans", sans-serif;
}
.caption span { flex: 1; }
.caption button { width: 11px; height: 11px; display: grid; place-items: center; }
.caption svg { width: 7px; height: 7px; }
.frame { flex: 1; min-height: 0; display: flex; padding: 2px 3px 1px 2px; border: 1px solid; border-color: #fff #696969 #696969 #fff; box-shadow: inset -1px -1px #a0a0a0; }
.sunken { flex: 1; min-width: 0; display: flex; flex-direction: column; background: #fff; border: 2px solid; border-color: #808080 #e3e3e3 #e3e3e3 #808080; overflow: hidden; }
.tabs { display: flex; height: 18px; flex: none; }
.tabs button { height: 18px; margin-top: -1px; padding: 0 7px 0 6px; line-height: 17px; background: #f0f0f0; border: 1px solid; border-color: #f0f0f0 #696969 #696969 #fff; box-shadow: inset -1px -1px #a0a0a0; }
.project .tabs { margin-bottom: 10px; }
.props .tabs { margin-bottom: 12px; }
.filled::after { content: ""; flex: 1; height: 16px; border: 1px solid #696969; border-left: 0; border-top: 0; }

/* trees */
.tree, .tree ul { list-style: none; margin: 0; padding: 0; }
.tree ul { padding-left: 19px; }
.tree li { position: relative; }
.tree li::before { content: ""; position: absolute; left: 4px; top: 0; bottom: 0; border-left: 1px dotted #808080; }
.tree li:last-child::before { bottom: auto; height: 11px; }
.tree > li:first-child::before { top: 11px; }
.tree > li:only-child::before { display: none; }
.node { position: relative; display: flex; align-items: center; height: 20px; white-space: nowrap; }
.node::before { content: ""; position: absolute; left: 5px; width: 11px; border-top: 1px dotted #808080; }
.leaf { padding-left: 9px; }
.exp { position: relative; width: 9px; height: 9px; border: 1px solid #808080; background: linear-gradient(#000, #000) center / 5px 1px no-repeat #fff; }
.exp.plus { background: linear-gradient(#000, #000) center / 5px 1px no-repeat, linear-gradient(#000, #000) center / 1px 5px no-repeat #fff; }
.node svg { width: 16px; height: 16px; margin: 0 3px 0 6px; }
.node span, .node strong { padding: 0 2px; }
.node .sel { background: #f0f0f0; }
.tree.wide { padding: 0 0 0 4px; }
.wide .node { height: 22px; line-height: 22px; }
.wide strong, .wide span { padding-right: 3px; }
.wide strong { font-size: 13px; }

.modeltree { width: 288px; flex: none; margin: 0 4px 5px 0; padding: 0 0 0 4px; background: #fff; border: 2px solid; border-color: #696969 #e3e3e3 #fff #696969; }

/* properties */
table { width: 100%; border-collapse: separate; border-spacing: 0; table-layout: fixed; }
.c-name { width: 116px; }
.c-value { width: 132px; }
.c-unit { width: 44px; }
th { height: 21px; padding: 0; background: #f0f0f0; font-weight: 400; line-height: 18px; border: 1px solid; border-color: #fff #696969 #696969 #fff; overflow: hidden; box-shadow: inset -1px -1px #a0a0a0; }
td { height: 20px; padding: 0 0 0 2px; line-height: 19px; white-space: nowrap; border-right: 1px solid #c0c0c0; border-bottom: 1px solid #c0c0c0; }
td:last-child { border-right: 0; }
td.mid { text-align: center; padding: 0 2px; }
td.mid > * { display: block; margin: 0 auto; }
input[type="checkbox"] { width: 13px; height: 13px; background: #fff; border: 1px solid; border-color: #696969 #e3e3e3 #e3e3e3 #696969; box-shadow: -1px -1px #a0a0a0; }
td input[type="checkbox"] { width: 14px; height: 14px; }
input[type="checkbox"]:checked { background: #fff url("data:image/svg+xml,%3Csvg xmlns='http://www.w3.org/2000/svg' width='9' height='9'%3E%3Cpath d='M1 3.500l2.500 2.500L8 1.500' stroke='%23000' stroke-width='2' fill='none'/%3E%3C/svg%3E") no-repeat center; }
td .swatch { width: 120px; height: 12px; background: #8484c0; border: 1px solid #000; }
td .cellbtn { width: 128px; height: 16px; line-height: 14px; background: #f0f0f0; border: 1px solid; border-color: #fff #696969 #696969 #fff; }
.hscroll { margin-top: auto; height: 15px; display: flex; align-items: center; background: #f0f0f0; flex: none; }
.hscroll svg { width: 8px; height: 8px; margin: 0 5px 0 4px; shape-rendering: auto; }
.track { flex: 1; align-self: stretch; display: flex; }
.track i { width: 80%; background: #cdcdcd; }

/* 3D view */
.viewport { flex: 1; min-width: 0; margin: 0 1px 5px 0; border: 2px solid; border-color: #696969 #fff #fff #696969; overflow: hidden; }
.scene { width: 100%; height: 100%; }
.mono { font: 12px "Liberation Mono", monospace; }
.scale { font: 12px "Liberation Sans", sans-serif; }

/* bottom docks */
.bottom { flex: none; height: 153px; display: flex; border-top: 2px solid #696969; border-bottom: 1px solid #a0a0a0; }
.bdock { display: flex; gap: 1px; padding: 2px; }
.msg { flex: 1; border-right: 2px solid #696969; padding-right: 7px; }
.prog { width: calc(50% - 3px); padding: 2px 4px 2px 3px; }
.vcap { width: 14px; margin-bottom: 1px; display: flex; flex-direction: column; align-items: center; padding: 1px 0 3px; gap: 2px; border: 1px solid #a0a0a0; border-radius: 2px; }
.vcap button { width: 11px; height: 12px; display: grid; place-items: center; }
.vcap svg { width: 7px; height: 7px; }
.vcap span { margin-top: auto; writing-mode: vertical-rl; transform: rotate(180deg); font: 9px/12px "DejaVu Sans", sans-serif; white-space: nowrap; }
.pane { flex: 1; background: #fff; border: 1px solid #828790; margin-bottom: 2px; }
.prog .pane { border: 2px solid; border-color: #696969 #e3e3e3 #e3e3e3 #696969; }

.status { flex: none; height: 20px; display: flex; justify-content: flex-end; gap: 3px; padding: 2px 1px 0 0; border-top: 1px solid #fff; }
.status span { padding: 0 2px 0 3px; line-height: 16px; border: 1px solid; border-color: #a0a0a0 #fff #fff #a0a0a0; }

/* dialog */
.dialog { position: absolute; left: 577px; top: 348px; width: 567px; background: #f0f0f0; border: 1px solid #1883d7; box-shadow: 0 4px 18px rgba(0, 0, 0, .35); }
.dlg-title { display: flex; align-items: center; justify-content: space-between; height: 30px; padding: 0 10px 0 8px; background: #fff; }
.dlg-title button { width: 11px; height: 11px; }
.dlg-title svg { width: 11px; height: 11px; }
.dlg-body { display: flex; flex-direction: column; padding: 61px 2px 2px 23px; }
fieldset { width: 440px; margin: 0; padding: 0 0 0 16px; border: 1px solid #a0a0a0; }
legend { margin-left: -10px; padding: 0 2px; line-height: 20px; }
.renorm { height: 180px; margin-bottom: 17px; }
.deembed { height: 151px; margin-bottom: 23px; }
.opt { display: flex; align-items: center; gap: 6px; height: 32px; }
.renorm .opt { padding-left: 6px; }
.renorm .opt:first-of-type { margin-top: 2px; }
.deembed .opt { padding-left: 2px; margin-top: 10px; }
input[type="radio"] { width: 11px; height: 11px; border: 1px solid; border-color: #696969 #e3e3e3 #e3e3e3 #696969; border-radius: 50%; background: #fff; }
input[type="radio"]:checked { background: radial-gradient(circle, #000 2px, #fff 3px); }
.imp { display: flex; align-items: center; padding-left: 30px; }
.imp label { width: 143px; }
.imp input { width: 149px; height: 25px; padding: 0 2px; background: #fff; border: 2px solid; border-color: #808080 #e3e3e3 #e3e3e3 #808080; }
.ohm { width: 67px; height: 24px; margin-left: 14px; padding-left: 2px; line-height: 20px; background-size: 16px 20px; }
.btn { width: 88px; height: 30px; background: #f0f0f0; border: 1px solid; border-color: #fff #696969 #696969 #fff; box-shadow: inset -1px -1px #a0a0a0; }
.defaults { margin-left: 180px; }
.dlg-foot { display: flex; justify-content: flex-end; margin: 63px 0 0 -11px; padding-top: 19px; border-top: 1px solid #a0a0a0; box-shadow: inset 0 1px #fff; }
.primary { border: 2px solid #696969; }
.cancel { margin-left: 12px; }
```
